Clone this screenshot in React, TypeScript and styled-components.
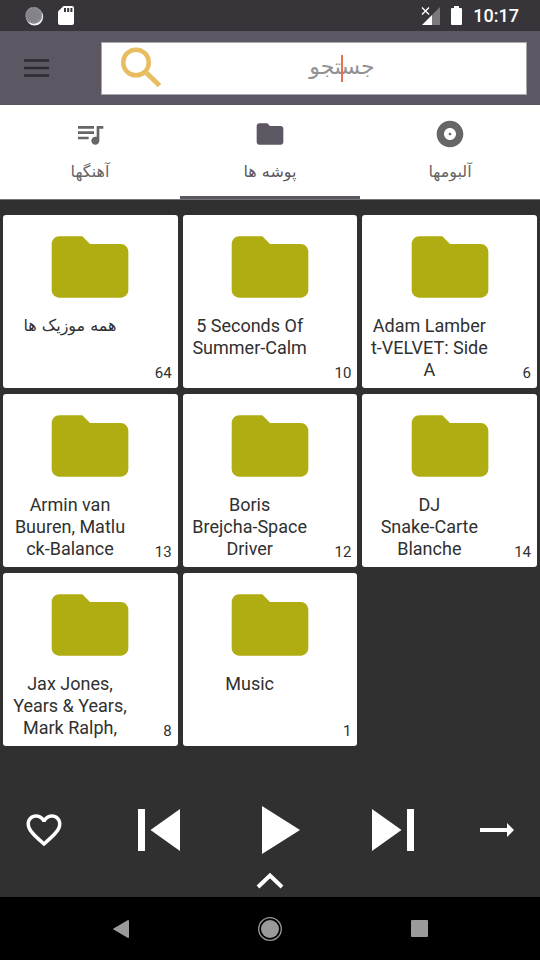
import React from "react";
import styled, { createGlobalStyle } from "styled-components";

const GlobalStyle = createGlobalStyle`
  * { box-sizing: border-box; }
  body {
    margin: 0;
    background: #303030;
    font-family: Roboto, "DejaVu Sans", sans-serif;
  }
  button { border: 0; padding: 0; background: none; font: inherit; color: inherit; cursor: pointer; }
  svg { display: block; flex: none; }
`;

const Screen = styled.div`
  display: flex;
  flex-direction: column;
  min-height: 100vh;
  background: #303030;
`;

const StatusBar = styled.div`
  display: flex;
  align-items: center;
  justify-content: space-between;
  height: 31px;
  padding: 0 21px 0 24px;
  background: #37353a;
  color: #fff;
`;

const StatusGroup = styled.div<{ $gap: number }>`
  display: flex;
  align-items: center;
  gap: ${(p) => p.$gap}px;
`;

const Clock = styled.time`
  font-size: 18px;
  line-height: 24px;
  font-weight: 500;
`;

const Toolbar = styled.header`
  display: flex;
  align-items: center;
  gap: 52px;
  height: 74px;
  padding: 0 13px 0 24px;
  background: #5d5763;
`;

const MenuButton = styled.button`
  display: flex;
`;

const SearchBox = styled.label`
  position: relative;
  display: flex;
  align-items: center;
  flex: 1;
  min-width: 0;
  height: 53px;
  padding-left: 18px;
  background: #fff;
  border: 1px solid #a9a6ac;
`;

const SearchInput = styled.input`
  flex: 1;
  min-width: 0;
  height: 50px;
  padding: 0 4px 4px 0;
  border: 0;
  outline: 0;
  background: transparent;
  text-align: center;
  font-family: "DejaVu Sans", sans-serif;
  font-size: 22px;
  color: #333;
  &::placeholder { color: #929292; opacity: 1; }
`;

const Caret = styled.span`
  position: absolute;
  top: 12px;
  left: 239px;
  width: 2px;
  height: 27px;
  background: #e8704c;
`;

const Tabs = styled.nav`
  display: grid;
  grid-template-columns: repeat(3, 1fr);
  height: 95px;
  background: #fff;
  border-bottom: 1px solid #747474;
`;

const Tab = styled.button<{ $active?: boolean }>`
  display: flex;
  flex-direction: column;
  align-items: center;
  gap: 9px;
  padding-top: 13px;
  color: ${(p) => (p.$active ? "#5d5763" : "#666")};
  border-bottom: 3px solid ${(p) => (p.$active ? "#5d5763" : "transparent")};
`;

const TabLabel = styled.span`
  font-family: "DejaVu Sans", sans-serif;
  font-size: 16px;
  line-height: 26px;
`;

const FolderGrid = styled.main`
  display: grid;
  grid-template-columns: repeat(3, 1fr);
  align-content: start;
  gap: 6px 5px;
  flex: 1;
  padding: 15px 3px 24px;
`;

const FolderCard = styled.button`
  display: flex;
  flex-direction: column;
  min-height: 173px;
  padding: 6px 6px 5px;
  background: #fff;
  border-radius: 3px;
  color: #303030;
`;

const FolderArt = styled.div`
  display: flex;
  align-self: center;
  color: #afad11;
`;

const CardText = styled.div`
  display: flex;
  flex: 1;
  justify-content: space-between;
  align-self: stretch;
  padding-top: 2px;
`;

const Title = styled.span`
  width: 122px;
  font-size: 18px;
  line-height: 22px;
  white-space: pre-line;
  text-align: center;
`;

const PersianTitle = styled(Title)`
  font-family: "DejaVu Sans", sans-serif;
  font-size: 16px;
`;

const Count = styled.span`
  align-self: flex-end;
  font-size: 15px;
  line-height: 20px;
`;

const Player = styled.section`
  display: grid;
  grid-template-columns: 88fr 142fr 102fr 122fr 86fr;
  justify-items: center;
  align-items: center;
  row-gap: 11px;
  padding-bottom: 6px;
  color: #fff;
`;

const PlayerButton = styled.button`
  display: flex;
`;

const ExpandButton = styled.button`
  display: flex;
  grid-column: 1 / -1;
`;

const SystemNav = styled.nav`
  display: grid;
  grid-template-columns: repeat(3, 149px);
  justify-content: center;
  justify-items: center;
  align-items: center;
  height: 63px;
  background: #000;
  color: #9a9a9a;
`;

const FOLDER_PATH =
  "M10 4H4c-1.1 0-1.99.9-1.99 2L2 18c0 1.1.9 2 2 2h16c1.1 0 2-.9 2-2V8c0-1.1-.9-2-2-2h-8l-2-2z";

const Glyph = ({ size, d }: { size: number; d: string }) => (
  <svg width={size} height={size} viewBox="0 0 24 24" fill="currentColor" aria-hidden="true">
    <path d={d} />
  </svg>
);

const tabs = [
  {
    label: "آهنگها",
    path: "M15 6H3v2h12V6zm0 4H3v2h12v-2zM3 16h8v-2H3v2zM17 6v8.18c-.31-.11-.65-.18-1-.18-1.66 0-3 1.34-3 3s1.34 3 3 3 3-1.34 3-3V8h3V6h-5z",
  },
  { label: "پوشه ها", active: true, path: FOLDER_PATH },
  {
    label: "آلبومها",
    path: "M12 2C6.48 2 2 6.48 2 12s4.48 10 10 10 10-4.48 10-10S17.52 2 12 2zm0 14.5c-2.49 0-4.5-2.01-4.5-4.5S9.51 7.5 12 7.5s4.5 2.01 4.5 4.5-2.01 4.5-4.5 4.5zm0-5.5c-.55 0-1 .45-1 1s.45 1 1 1 1-.45 1-1-.45-1-1-1z",
  },
];

const folders = [
  { title: "همه موزیک ها", count: 64, persian: true },
  { title: "5 Seconds Of\nSummer-Calm", count: 10 },
  { title: "Adam Lamber\nt-VELVET: Side\nA", count: 6 },
  { title: "Armin van\nBuuren, Matlu\nck-Balance", count: 13 },
  { title: "Boris\nBrejcha-Space\nDriver", count: 12 },
  { title: "DJ\nSnake-Carte\nBlanche", count: 14 },
  { title: "Jax Jones,\nYears & Years,\nMark Ralph,", count: 8 },
  { title: "Music", count: 1 },
];

export default function App() {
  return (
    <Screen>
      <GlobalStyle />
      <StatusBar>
        <StatusGroup $gap={14}>
          <svg width="20" height="20" viewBox="0 0 20 20" aria-hidden="true">
            <circle cx="10.6" cy="10.8" r="8.6" fill="#f4f4f4" />
            <circle cx="9.8" cy="9.4" r="8.4" fill="#85838a" />
            <circle cx="9.8" cy="9.4" r="7.6" fill="none" stroke="#9c9aa0" strokeWidth="1.6" strokeDasharray="1.2 1.3" />
          </svg>
          <svg width="16" height="19" viewBox="0 0 16 19" aria-hidden="true">
            <path d="M5.5 0H14a2 2 0 0 1 2 2v15a2 2 0 0 1-2 2H2a2 2 0 0 1-2-2V5.5z" fill="#fff" />
            <path d="M6 2h2v4H6zM9.2 2h2v4h-2zM12.4 2h2v4h-2z" fill="#37353a" />
          </svg>
        </StatusGroup>
        <StatusGroup $gap={11}>
          <svg width="19" height="19" viewBox="0 0 19 19" aria-hidden="true">
            <path d="M19 1v18H11V9z" fill="#7b797d" />
            <path d="M11 9v10H1z" fill="#fff" />
            <path d="M1 1.500l7 7M8 1.500l-7 7" stroke="#fff" strokeWidth="1.4" />
          </svg>
          <svg width="11" height="19" viewBox="0 0 11 19" fill="#fff" aria-hidden="true">
            <path d="M3 0h5v2h2a1 1 0 0 1 1 1v15a1 1 0 0 1-1 1H1a1 1 0 0 1-1-1V3a1 1 0 0 1 1-1h2z" />
          </svg>
          <Clock>10:17</Clock>
        </StatusGroup>
      </StatusBar>

      <Toolbar>
        <MenuButton aria-label="منو">
          <svg width="25" height="18" viewBox="0 0 25 18" fill="#2d2a31">
            <path d="M0 .2h25v2.600H0zM0 7.700h25v2.600H0zM0 15.200h25v2.600H0z" />
          </svg>
        </MenuButton>
        <SearchBox>
          <svg width="42" height="42" viewBox="0 0 42 42" fill="none" stroke="#e7bd62" aria-hidden="true">
            <circle cx="16" cy="15.500" r="12.800" strokeWidth="4.500" />
            <path d="M26.500 26L39.500 38.500" strokeWidth="5" />
          </svg>
          <SearchInput type="text" dir="rtl" placeholder="جستجو" aria-label="جستجو" />
          <Caret />
        </SearchBox>
      </Toolbar>

      <Tabs>
        {tabs.map((t) => (
          <Tab key={t.label} $active={t.active}>
            <Glyph size={32} d={t.path} />
            <TabLabel dir="rtl">{t.label}</TabLabel>
          </Tab>
        ))}
      </Tabs>

      <FolderGrid>
        {folders.map((f) => (
          <FolderCard key={f.title}>
            <FolderArt>
              <Glyph size={92} d={FOLDER_PATH} />
            </FolderArt>
            <CardText>
              {f.persian ? <PersianTitle dir="rtl">{f.title}</PersianTitle> : <Title>{f.title}</Title>}
              <Count>{f.count}</Count>
            </CardText>
          </FolderCard>
        ))}
      </FolderGrid>

      <Player>
        <PlayerButton aria-label="علاقه مندی">
          <Glyph
            size={42}
            d="M16.5 3c-1.74 0-3.41.81-4.5 2.09C10.91 3.81 9.24 3 7.5 3 4.42 3 2 5.42 2 8.5c0 3.78 3.4 6.86 8.55 11.54L12 21.35l1.45-1.32C18.6 15.36 22 12.28 22 8.5 22 5.42 19.58 3 16.5 3zm-4.4 15.55l-.1.1-.1-.1C7.14 14.24 4 11.39 4 8.5 4 6.5 5.5 5 7.5 5c1.54 0 3.04.99 3.57 2.36h1.87C13.46 5.99 14.96 5 16.5 5c2 0 3.5 1.5 3.5 3.5 0 2.89-3.14 5.74-7.9 10.05z"
          />
        </PlayerButton>
        <PlayerButton aria-label="قبلی">
          <svg width="42" height="42" viewBox="0 0 42 42" fill="currentColor">
            <path d="M0 0h7v42H0zM42 0v42L12.500 21z" />
          </svg>
        </PlayerButton>
        <PlayerButton aria-label="پخش">
          <svg width="38" height="48" viewBox="0 0 38 48" fill="currentColor">
            <path d="M0 0v48l38-24z" />
          </svg>
        </PlayerButton>
        <PlayerButton aria-label="بعدی">
          <svg width="42" height="42" viewBox="0 0 42 42" fill="currentColor">
            <path d="M0 0v42l29.500-21zM35 0h7v42h-7z" />
          </svg>
        </PlayerButton>
        <PlayerButton aria-label="ترتیب پخش">
          <svg width="34" height="14" viewBox="0 0 34 14" fill="currentColor">
            <path d="M0 5h27V0l7 7-7 7V9H0z" />
          </svg>
        </PlayerButton>
        <ExpandButton aria-label="نمایش پخش کننده">
          <svg width="28" height="26" viewBox="0 0 28 26" fill="none" stroke="currentColor" strokeWidth="4">
            <path d="M2 22L14 10.500l12 11.500" />
          </svg>
        </ExpandButton>
      </Player>

      <SystemNav>
        <button aria-label="Back">
          <svg width="16" height="18" viewBox="0 0 16 18" fill="currentColor">
            <path d="M15 0a1 1 0 0 1 1 1v16a1 1 0 0 1-1 1L.5 9.6a.7.7 0 0 1 0-1.2z" />
          </svg>
        </button>
        <button aria-label="Home">
          <svg width="24" height="24" viewBox="0 0 24 24">
            <circle cx="12" cy="12" r="11.3" fill="none" stroke="currentColor" strokeWidth="1.3" />
            <circle cx="12" cy="12" r="9" fill="currentColor" />
          </svg>
        </button>
        <button aria-label="Recents">
          <svg width="17" height="17" viewBox="0 0 17 17" fill="currentColor">
            <rect width="17" height="17" rx="1" />
          </svg>
        </button>
      </SystemNav>
    </Screen>
  );
}
